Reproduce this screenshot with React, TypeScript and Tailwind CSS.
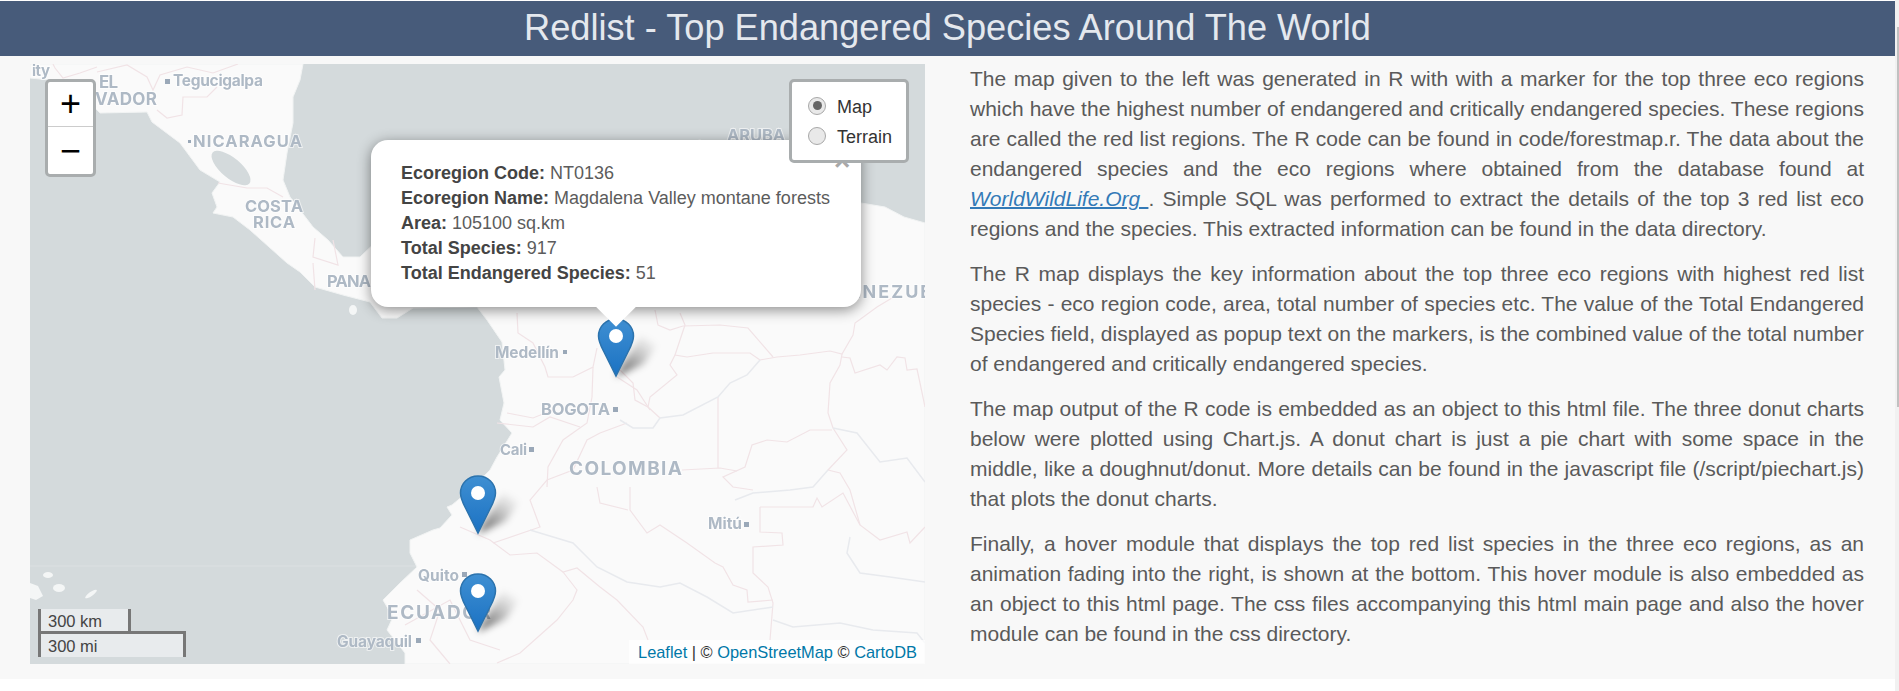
const borders = [
  'M53 64 L55 68 L63 78 L80 73 L97 67',
  'M97 72 L127 65 L147 77 L153 90 L160 75 L187 67 L213 73 L238 64',
  'M157 110 L167 118 L182 115 L183 97 L207 97 L217 87',
  'M218 183 L247 188 L267 188 L283 197',
  'M315 238 L313 257 L338 265 L333 240',
  'M313 263 L315 290',
  'M517 313 L518 333 L533 343 L545 367 L548 377 L573 377 L593 367 L597 348',
  'M593 367 L592 397 L587 423 L563 440 L548 467 L547 487',
  'M617 377 L637 390 L650 410',
  'M507 413 L533 418 L553 410',
  'M655 310 L658 325 L670 330 L683 326 L720 325 L748 328 L773 357',
  'M680 313 L685 325 L675 355 L687 357 L713 353 L750 353 L760 360',
  'M760 360 L777 357 L800 355 L830 351 L842 354 L853 335 L855 323 L877 307 L897 295',
  'M842 354 L840 365 L830 383 L828 413 L833 428 L847 450 L828 470 L840 473 L850 490 L860 525 L880 540 L907 532 L910 543 L925 527',
  'M842 357 L850 358 L855 373 L880 365 L887 370 L897 357 L905 358 L907 370 L917 369 L920 383 L925 407',
  'M832 430 L810 430 L787 442 L767 440 L752 445 L745 467 L723 477 L733 487 L753 490',
  'M718 397 L718 468',
  'M682 470 L720 468 L737 471',
  'M620 370 L633 383 L635 400 L648 407 L650 397 L677 375 L670 365 L675 355',
  'M648 407 L660 418',
  'M760 507 L813 507 L817 498 L822 507 L843 493 L860 525',
  'M760 507 L760 532 L782 533 L783 545 L753 547 L753 573 L768 587 L773 603 L770 640',
  'M630 487 L630 510 L647 533 L660 525 L687 543 L715 563 L723 567 L733 585 L747 590 L748 602 L773 600',
  'M597 487 L600 503 L628 510',
  'M460 527 L490 540 L510 555 L537 553 L563 572 L577 568 L600 587 L617 600 L643 627 L648 640',
  'M563 572 L577 590 L573 600 L557 620 L520 653 L497 663',
  'M493 543 L540 527 L530 500 L547 480 L573 470 L587 440 L600 433 L627 423',
  'M580 427 L550 417 L533 427 L497 423',
  'M417 590 L440 610 L430 640 L450 664',
  'M405 625 L450 600 L470 640 L500 650',
]

const rivers = [
  'M760 360 L747 375 L730 383 L718 397 L683 415 L660 418 L653 428 L633 428 L620 420',
  'M833 428 L857 433 L880 462 L907 458 L925 482',
  'M828 470 L813 487 L790 490 L753 493 L735 500',
  'M530 530 L573 543 L597 567 L627 582 L660 587 L680 583 L707 597 L733 613 L773 607',
  'M773 620 L793 627 L840 623 L873 630 L917 633 L925 643',
  'M850 537 L847 553 L860 573 L890 577 L925 582',
]

const labels = [
  { t: 'ity', x: 32, y: 76, s: 15, w: 18 },
  { t: 'EL', x: 99, y: 88, s: 17, w: 19 },
  { t: 'SALVADOR', x: 62, y: 105, s: 17, w: 95 },
  { t: 'Tegucigalpa', x: 173, y: 86, s: 15.5, w: 90 },
  { t: 'NICARAGUA', x: 193, y: 147, s: 16.5, w: 109 },
  { t: 'COSTA', x: 245, y: 212, s: 16.5, w: 58 },
  { t: 'RICA', x: 253, y: 228, s: 16.5, w: 42 },
  { t: 'PANAMA', x: 327, y: 287, s: 16.5, w: 70 },
  { t: 'ARUBA', x: 727, y: 141, s: 16.5, w: 58 },
  { t: 'VENEZUELA', x: 834, y: 298, s: 18, w: 125 },
  { t: 'Medellín', x: 495, y: 358, s: 15.5, w: 64 },
  { t: 'BOGOTA', x: 541, y: 415, s: 16.5, w: 69 },
  { t: 'Cali', x: 500, y: 455, s: 15, w: 27 },
  { t: 'COLOMBIA', x: 569, y: 475, s: 19, w: 113 },
  { t: 'Mitú', x: 708, y: 529, s: 15.5, w: 34 },
  { t: 'Quito', x: 418, y: 581, s: 15.5, w: 41 },
  { t: 'ECUADOR', x: 387, y: 619, s: 19, w: 104 },
  { t: 'Guayaquil', x: 337, y: 647, s: 15.5, w: 75 },
]

const cityDots = [
  [165, 79, 5], [188, 140, 3], [563, 350, 4], [613, 407, 5], [529, 447, 5], [744, 522, 5], [462, 572, 5], [416, 638, 5],
]

const pins = [
  [597.5, 318],
  [459.5, 475],
  [459.5, 573],
]

const popupRows = [
  ['Ecoregion Code:', 'NT0136'],
  ['Ecoregion Name:', 'Magdalena Valley montane forests'],
  ['Area:', '105100 sq.km'],
  ['Total Species:', '917'],
  ['Total Endangered Species:', '51'],
]

const paragraphs = [
  <>
    The map given to the left was generated in R with with a marker for the top three eco regions which have the
    highest number of endangered and critically endangered species. These regions are called the red list regions.
    The R code can be found in code/forestmap.r. The data about the endangered species and the eco regions where
    obtained from the database found at{' '}
    <a href="#" className="italic text-[#337ab7] underline decoration-2">
      WorldWildLife.Org&nbsp;
    </a>
    . Simple SQL was performed to extract the details of the top 3 red list eco regions and the species. This
    extracted information can be found in the data directory.
  </>,
  <>
    The R map displays the key information about the top three eco regions with highest red list species - eco region
    code, area, total number of species etc. The value of the Total Endangered Species field, displayed as popup text
    on the markers, is the combined value of the total number of endangered and critically endangered species.
  </>,
  <>
    The map output of the R code is embedded as an object to this html file. The three donut charts below were plotted
    using Chart.js. A donut chart is just a pie chart with some space in the middle, like a doughnut/donut. More
    details can be found in the javascript file (/script/piechart.js) that plots the donut charts.
  </>,
  <>
    Finally, a hover module that displays the top red list species in the three eco regions, as an animation fading
    into the right, is shown at the bottom. This hover module is also embedded as an object to this html page. The css
    files accompanying this html main page and also the hover module can be found in the css directory.
  </>,
]

const Pin = ({ x, y }: { x: number; y: number }) => (
  <g transform={`translate(${x} ${y})`}>
    <path d="M18 59 L30 38 L44 18 L60 26 L46 46 Z" fill="url(#pinShadow)" filter="url(#soft)" />
    <path
      d="M18.5 1 C8.5 1 1 8.5 1 18 C1 24 4 29 7 35 L18.5 58 L30 35 C33 29 36 24 36 18 C36 8.5 28.5 1 18.5 1 Z"
      fill="url(#pinFill)"
      stroke="#2c73ad"
      strokeWidth="1.5"
    />
    <circle cx="18.5" cy="18" r="7" fill="#fff" />
  </g>
)

const MapBase = () => (
  <svg viewBox="30 64 895 600" className="absolute inset-0 h-full w-full blur-[0.35px]">
    <defs>
      <linearGradient id="pinFill" x1="0" y1="0" x2="0" y2="1">
        <stop offset="0" stopColor="#3f8fd2" />
        <stop offset="1" stopColor="#1b72c3" />
      </linearGradient>
      <linearGradient id="pinShadow" x1="0.2" y1="1" x2="0.9" y2="0.1">
        <stop offset="0" stopColor="#000" stopOpacity="0.6" />
        <stop offset="0.5" stopColor="#000" stopOpacity="0.25" />
        <stop offset="1" stopColor="#000" stopOpacity="0" />
      </linearGradient>
      <filter id="soft" x="-40%" y="-40%" width="180%" height="180%">
        <feGaussianBlur stdDeviation="3.5" />
      </filter>
    </defs>
    <path
      d="M30 64 L303 64 L300 80 L293 97 L293 123 L287 153 L283 180 L290 197 L313 227 L328 240 L343 257 L360 257 L420 200 L700 140 L861 203 L885 207 L904 217 L925 223 L925 664 L405 664 L405 653 L387 630 L393 617 L383 600 L400 583 L417 567 L410 553 L410 540 L433 530 L440 528 L452 515 L447 507 L452 505 L470 490 L490 470 L497 457 L512 433 L500 420 L504 403 L499 377 L505 370 L502 342 L487 320 L477 307 L413 308 L397 318 L382 318 L370 302 L343 295 L315 287 L300 272 L287 263 L250 230 L233 217 L213 213 L217 207 L212 193 L220 182 L200 170 L180 143 L152 122 L147 112 L100 113 L95 108 L50 80 L30 78 Z"
      fill="#fafafa"
      stroke="#f1f3f3"
      strokeWidth="1"
    />
    <ellipse cx="231" cy="168" rx="24" ry="10" transform="rotate(40 231 168)" fill="#d4dadc" />
    <path d="M30 583 L38 586 L43 596 L36 600 L30 598 Z" fill="#f4f6f6" />
    <ellipse cx="48" cy="575" rx="5" ry="3" fill="#f4f6f6" />
    <ellipse cx="59" cy="588" rx="6" ry="4" fill="#f4f6f6" />
    <ellipse cx="91" cy="594" rx="7" ry="2" transform="rotate(-35 91 594)" fill="#f4f6f6" />
    <ellipse cx="353" cy="310" rx="4" ry="5" fill="#f4f6f6" />
    <line x1="30" y1="566" x2="925" y2="566" stroke="#ffffff" strokeOpacity="0.2" />
    {borders.map((d) => (
      <path key={d} d={d} fill="none" stroke="#f1e3e6" strokeWidth="1.2" />
    ))}
    {rivers.map((d) => (
      <path key={d} d={d} fill="none" stroke="#e8eaee" strokeWidth="1.5" />
    ))}
    {labels.map((l) => (
      <text
        key={l.t}
        x={l.x}
        y={l.y}
        fontSize={l.s}
        fontWeight="700"
        fontFamily="Inter, sans-serif"
        textLength={l.w}
        lengthAdjust="spacing"
        fill="#aeb9c5"
        stroke="#ffffff"
        strokeOpacity="0.6"
        strokeWidth="2"
        paintOrder="stroke"
      >
        {l.t}
      </text>
    ))}
    {cityDots.map(([x, y, s]) => (
      <rect key={x} x={x} y={y} width={s} height={s} fill="#9aa8b8" />
    ))}
    {pins.map(([x, y]) => (
      <Pin key={y} x={x} y={y} />
    ))}
  </svg>
)

const Popup = () => (
  <div className="absolute left-[341px] top-[76px] h-[167px] w-[490px] rounded-[17px] bg-white pl-[30px] pt-[21px] text-[18px] leading-[25px] text-[#5c5c5c] shadow-[0_3px_14px_rgba(0,0,0,0.45)]">
    <div className="absolute bottom-[-14px] left-[231px] h-[28px] w-[28px] rotate-45 bg-white" />
    <span className="absolute left-[463px] top-[6px] text-[28px] font-bold leading-[30px] text-[#a8a8a8]">×</span>
    <div className="relative">
      {popupRows.map(([label, value]) => (
        <div key={label}>
          <b className="text-[#444]">{label}</b> {value}
        </div>
      ))}
    </div>
  </div>
)

const ZoomControl = () => (
  <div className="absolute left-[15px] top-[15px] flex h-[98px] w-[51px] flex-col overflow-hidden rounded-[5px] border-[3px] border-[#a9adae] bg-white text-black">
    <div className="flex h-[45px] items-center justify-center border-b border-[#ccc] text-[36px] leading-none">+</div>
    <div className="flex flex-1 items-center justify-center text-[36px] leading-none">−</div>
  </div>
)

const LayerControl = () => (
  <div className="absolute left-[759px] top-[15px] flex h-[84px] w-[120px] flex-col gap-[9px] rounded-[5px] border-[3px] border-[#a9adae] bg-white pl-[16px] pt-[13px] text-[18px] leading-[21px] text-[#333]">
    <label className="flex items-center gap-[11px]">
      <span className="flex h-[18px] w-[18px] items-center justify-center rounded-full border border-[#a8a8a8] bg-[#e9e9e9]">
        <span className="h-[9px] w-[9px] rounded-full bg-[#666]" />
      </span>
      <span className="h-[21px] pt-[2px]">Map</span>
    </label>
    <label className="flex items-center gap-[11px]">
      <span className="h-[18px] w-[18px] rounded-full border border-[#a8a8a8] bg-[#e9e9e9]" />
      <span className="h-[21px] pt-[2px]">Terrain</span>
    </label>
  </div>
)

const ScaleBar = () => (
  <div className="absolute bottom-[7px] left-[8px] flex flex-col items-start text-[16.5px] text-[#444]">
    <div className="h-[22px] w-[93px] border-x-[3px] border-[#777] bg-[#e8ebed] pl-[7px] leading-[24px]">300 km</div>
    <div className="h-[26px] w-[148px] border-x-[3px] border-t-[3px] border-[#777] bg-[#e8ebed] pl-[7px] leading-[25px]">300 mi</div>
  </div>
)

const Attribution = () => (
  <div className="absolute bottom-0 right-0 flex h-[24px] w-[296px] items-center justify-end whitespace-pre bg-white/70 pr-[8px] text-[16.4px] text-[#333]">
    <a href="#" className="text-[#0078a8]">Leaflet</a>
    {' | © '}
    <a href="#" className="text-[#0078a8]">OpenStreetMap</a>
    {' © '}
    <a href="#" className="text-[#0078a8]">CartoDB</a>
  </div>
)

const App = () => (
  <div className="flex min-h-[691px] bg-white font-['Liberation_Sans',Arial,sans-serif]">
    <div className="flex-1">
      <header className="mt-px flex h-[55px] items-center justify-center bg-[#475b7a] text-[36.2px] text-[#e4e8ee]">
        Redlist - Top Endangered Species Around The World
      </header>
      <main className="flex h-[623px] bg-[#f8f8f8] pl-[30px] pt-[8px]">
        <div className="relative h-[600px] w-[895px] shrink-0 overflow-hidden bg-[#d4dadc]">
          <MapBase />
          <Popup />
          <ZoomControl />
          <LayerControl />
          <ScaleBar />
          <Attribution />
        </div>
        <section className="ml-[45px] w-[894px] text-justify text-[21px] leading-[30px] text-[#5a5a5a]">
          {paragraphs.map((p, i) => (
            <p key={i} className="mb-[15px]">{p}</p>
          ))}
        </section>
      </main>
    </div>
    <div className="flex w-[4px] flex-col bg-[#f1f1f1] pt-[27px]">
      <div className="ml-[2px] h-[380px] bg-[#c1c1c1]" />
    </div>
  </div>
)

export default App
